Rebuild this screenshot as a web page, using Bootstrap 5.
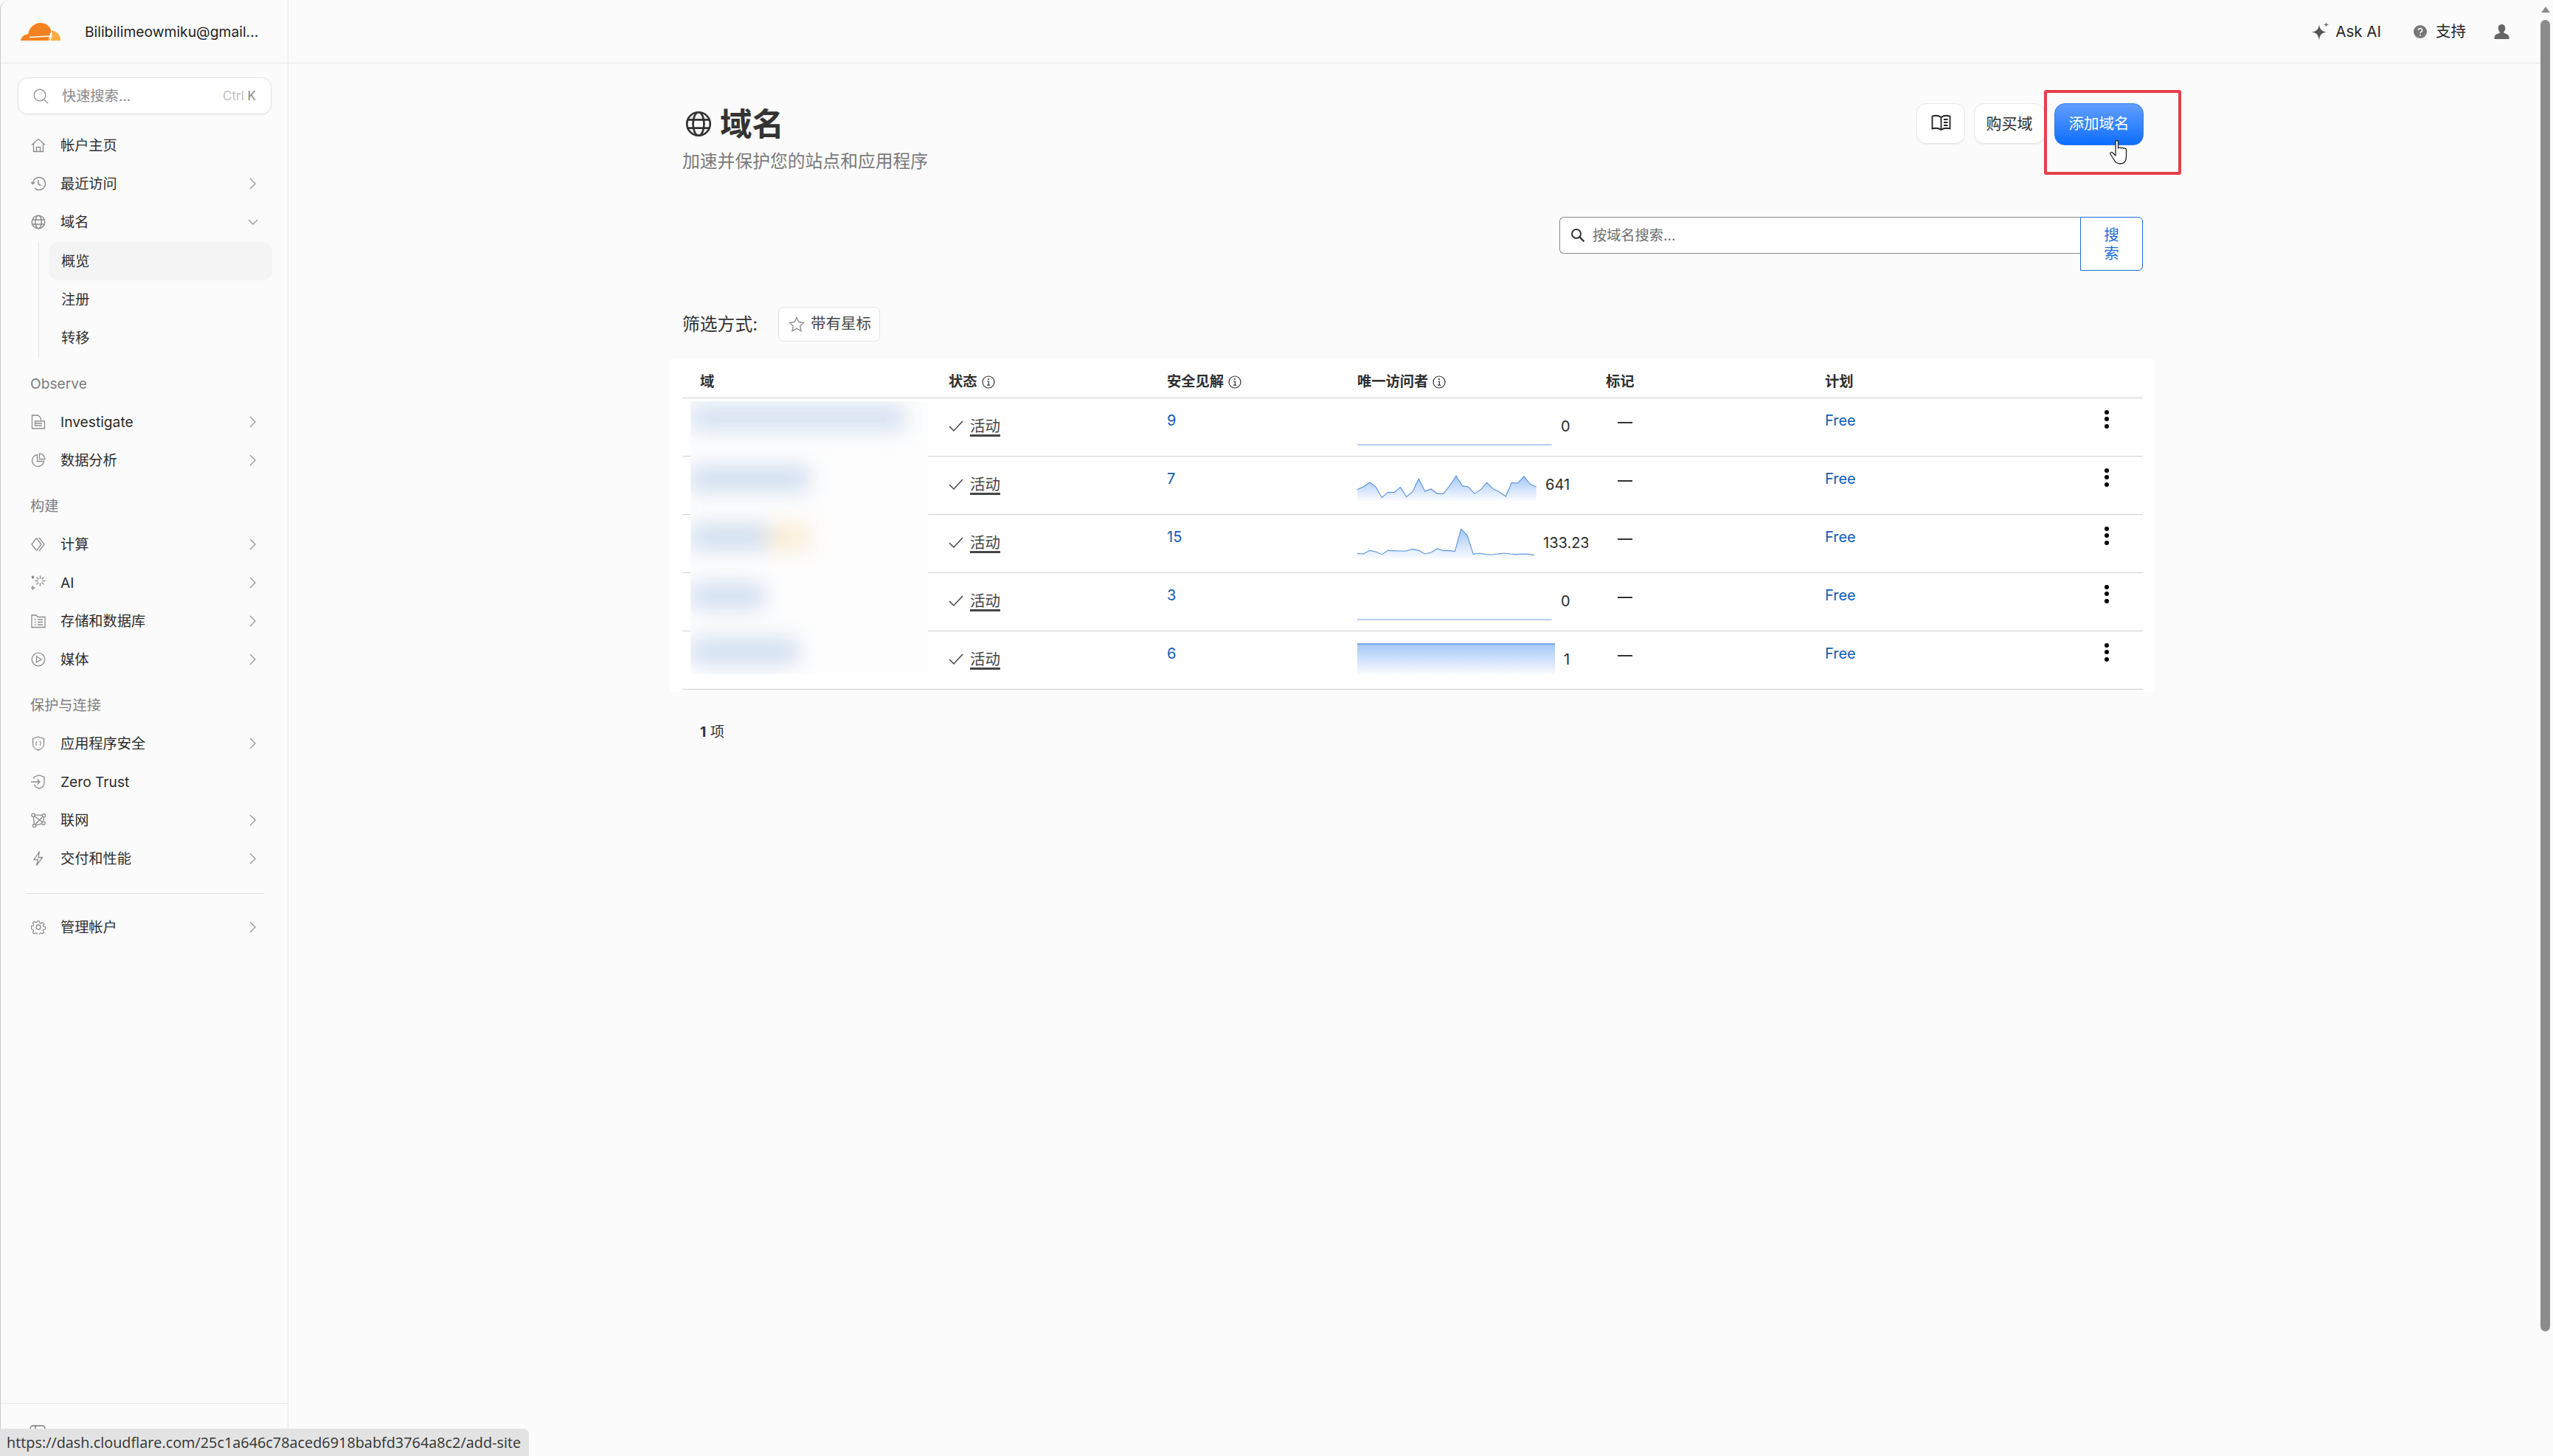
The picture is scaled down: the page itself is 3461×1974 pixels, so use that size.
<!DOCTYPE html>
<html lang="zh-CN">
<head>
<meta charset="utf-8">
<title>域名</title>
<link href="https://cdn.jsdelivr.net/npm/bootstrap@5.3.0/dist/css/bootstrap.min.css" rel="stylesheet">
<style>
html,body{height:100%;overflow:hidden}
body{background:#fbfbfb;color:#313131;font-family:Inter,"Noto Sans CJK SC",sans-serif;font-size:19.2px;line-height:24px}
.shell{height:1974px;border-left:1.5px solid #c9c9c9;border-top-left-radius:14px;overflow:hidden}
.side{width:390px;flex:0 0 390px;border-right:1px solid #e6e6e6;height:100%}
.side-top{height:86px;border-bottom:1px solid #e5e5e5;padding-left:27px;gap:33px}
.side-top span{font-size:19.3px;color:#1f1f1f}
.side-search{margin:19px 22px 16px 23px;height:50px;background:#fff;border:1.5px solid #e2e2e2;border-radius:13px;box-shadow:0 1px 2px rgba(0,0,0,.05);padding:0 20px 0 20px;color:#8a8a8a;gap:18px}
.side-search .hint{margin-left:auto;font-size:17px;color:#c0c0c0}
.side-search .hint b{font-weight:400;color:#8a8a8a}
.nav-line{height:52.2px;padding:0 42px 0 41px;gap:20px;color:#2c2c2c;text-decoration:none}
.nav-line>svg:first-child{width:20px;height:20px;flex:none;color:#8c8c8c}
.nav-line .chev{margin-left:auto;width:11px;height:18px;color:#999}
.nav-line .chev-d{margin-left:auto;margin-right:-3px;width:16px;height:11px;color:#999}
.sub-list{margin-left:51px;border-left:1px solid #e2e2e2;padding-left:13px;margin-right:21px}
.sub-line{height:52.2px;padding-left:17px;border-radius:13px}
.sub-line.on{background:#f4f4f4}
.nav-head{height:52px;padding-left:40px;color:#7d7d7d;font-size:19.2px;margin-top:9.5px}
.nav-rule{border-top:1px solid #e2e2e2;margin:20px 33px 19px 34px}
.side-foot{margin-top:auto;height:72px;border-top:1px solid #e5e5e5;padding:26px 0 0 39px}
.top-bar{height:86px;border-bottom:1px solid #e5e5e5;padding-right:42px;color:#262626;font-size:20.5px}
.top-bar .gap-a{margin-right:44px}
.top-bar .gap-b{margin-right:38px}
.top-bar .gap-i{margin-right:12px}
.page{padding:53px 5px 0 0}
.page-in{width:1980px;margin:0 auto}
.head-title{font-size:43.5px;line-height:58px;font-weight:700;color:#333;gap:11px;margin:0}
.head-sub{font-size:23.8px;line-height:44px;color:#7a7a7a;margin-bottom:53px}
.btn-set{margin:1px -1px 0 0;gap:12px}
.ghost-btn{height:55px;width:96px;background:#fff;border:1.5px solid #e6e6e6;border-radius:13px;font-size:21px;color:#2b2b2b;padding:0;box-shadow:0 1px 2px rgba(0,0,0,.06)}
.book-btn{width:66px}
.add-wrap{margin-left:1px}
.add-btn{height:57px;width:121px;padding:0;border:1px solid #2f7ef0;border-radius:14px;background:linear-gradient(#629eff,#0d6efd);color:#fff;font-size:20.5px}
.red-box{position:absolute;left:-14px;top:-18px;width:186px;height:115px;border:4.5px solid #e5404a;border-radius:3px;pointer-events:none}
.hand{position:absolute;left:75px;top:50px;width:27px;height:33px}
.find-input{width:706px;height:50px;background:#fff;border:1px solid #8a8a8a;border-right:0;border-radius:6px 0 0 6px;padding:0 14px;gap:10px;color:#6e6e6e}
.find-btn{width:85px;height:73px;padding:0 28px;background:#fff;color:#1c6fdc;border:1.5px solid #1c6fdc;border-radius:0 6px 6px 0;font-size:20.5px;line-height:25px}
.filter-row{margin:49px 0 24px;height:47px;gap:28px;font-size:23.8px}
.star-btn{height:47px;padding:0 11px 0 13px;background:#fff;border:1.5px solid #e4e4e4;border-radius:7px;gap:8px;font-size:20.5px;color:#444}
.tbl-wrap{position:relative;width:2013px;margin-left:-17px;padding:0 16px 3px 17px;background:#fff}
.tbl{table-layout:fixed;width:1980px;margin:0;--bs-table-bg:transparent;--bs-table-border-color:#d0d0d0}
.tbl th{height:52px;padding:0 0 10px;vertical-align:bottom;font-weight:700;color:#2f2f2f;font-size:19.3px;border-bottom-width:1.5px}
.tbl td{height:79px;padding:18px 0 0;vertical-align:top;border-bottom-width:1.5px;color:#2a2a2a;font-size:20px}
.tbl th:first-child{padding-left:24px}
.tbl .st{padding-top:26.5px}
.tbl .vis{padding:0}
.tbl .dash{padding-top:22px}
.tbl .kb{padding:16px 46px 0 0}
.c1{width:361px}.c2{width:296px}.c3{width:258px}.c4{width:337px}.c5{width:297px}.c6{width:300px}
.tip-i{width:18px;height:18px;margin-left:6px;vertical-align:-3px}
.state{gap:9px;color:#454545;font-size:20.5px}
.state u{text-decoration-thickness:2.5px;text-underline-offset:4px}
.lnk{color:#0f5cb5;text-decoration:none}
.spark-box{width:313px;overflow:hidden;height:78px;gap:12px;white-space:nowrap}
.spark-box svg{flex:none;height:78px}
.spark-box span{margin-top:-2px}
.em-dash{display:block;width:20px;height:2.5px;margin-left:16px;margin-top:10px;background:#333}
.dots{gap:3.5px;width:6px}
.dots i{display:block;width:6px;height:6px;border-radius:50%;background:#000}
.count{padding:42px 0 0 24px;color:#333;font-size:19.2px}
.blur-over{position:absolute;left:28px;top:57px;width:322px;height:370px;overflow:hidden;background:#fdfdfd}
.smear{height:34px;margin-left:0;background:#cfddef;filter:blur(14px)}
.sm1{width:290px;margin-top:5px;background:#d3e0f0}.sm2{width:160px;margin-top:49px}.sm3{width:105px;margin-top:45px;box-shadow:55px 0 0 #f9ecd2}.sm4{width:100px;margin-top:46px}.sm5{width:145px;margin-top:41px}
.bar-col{width:17px;flex:0 0 17px;padding-top:9px}
.bar-up{width:0;height:0;border-left:6px solid transparent;border-right:6px solid transparent;border-bottom:8px solid #8a8a8a;margin:0 0 0 1px}
.bar-thumb{width:13px;height:1778px;margin-top:10px;background:#8b8b8b;border-radius:7px}
.link-tip{position:fixed;left:0;bottom:0;height:37px;width:717px;background:#e3e3e3;border-top-right-radius:7px;padding-left:9px;font-family:"Open Sans",sans-serif;font-size:19.85px;line-height:37px;color:#333;white-space:nowrap}
</style>
</head>
<body>
<svg width="0" height="0" class="position-absolute">
<defs>
<linearGradient id="sg" x1="0" y1="0" x2="0" y2="1"><stop offset="0" stop-color="#a4c6f8"/><stop offset="1" stop-color="#a4c6f8" stop-opacity=".05"/></linearGradient>
<symbol id="ch" viewBox="0 0 11 18"><path d="M2 2l7 7-7 7" fill="none" stroke="currentColor" stroke-width="1.4"/></symbol>
<symbol id="glb" viewBox="0 0 24 24"><g fill="none" stroke="currentColor" stroke-width="1.8"><circle cx="12" cy="12" r="10.5"/><ellipse cx="12" cy="12" rx="5" ry="10.5"/><path d="M2.3 8.3h19.4M2.3 15.7h19.4"/></g></symbol>
<symbol id="inf" viewBox="0 0 18 18"><circle cx="9" cy="9" r="8" fill="none" stroke="#333" stroke-width="1.2"/><path d="M7.3 8h2v5M7 13.2h4.2" fill="none" stroke="#333" stroke-width="1.2"/><circle cx="9" cy="5" r="1.1" fill="#333"/></symbol>
<symbol id="tk" viewBox="0 0 20 16"><path d="M1 8l6 6L19 1" fill="none" stroke="#444" stroke-width="1.5"/></symbol>
</defs>
</svg>
<div class="shell d-flex">
  <aside class="side d-flex flex-column">
    <div class="side-top d-flex align-items-center">
      <svg width="54" height="24" viewBox="0 0 54 24"><path fill="#f58220" d="M0 24C1 19 5 15.6 10 15.6 11.500 6 19 0 27 0c7 0 12 4 14.500 10.500L37 24z"/><path fill="#fbad41" d="M41.500 10.500C48.500 10.500 54 16 54 24H36l5-5c2-2 2-5 .5-8.500z"/><path d="M12 19.500l27-1.500M40 24l2-7" stroke="#fff" stroke-width="1.300" fill="none"/></svg>
      <span>Bilibilimeowmiku@gmail...</span>
    </div>
    <div class="side-search d-flex align-items-center">
      <svg width="21" height="21" viewBox="0 0 21 21" class="flex-none"><circle cx="9" cy="9" r="7.800" fill="none" stroke="#999" stroke-width="1.500"/><path d="M14.500 14.500l5.500 5.500" stroke="#999" stroke-width="1.500"/></svg>
      <span>快速搜索...</span>
      <span class="hint">Ctrl <b>K</b></span>
    </div>
    <a class="nav-line d-flex align-items-center"><svg viewBox="0 0 20 20" fill="none" stroke="currentColor" stroke-width="1.300"><path d="M1 9.500L10 1.500l9 8M3.500 8v10.500h13V8M7.500 18.500v-6h5v6"/></svg>帐户主页</a>
    <a class="nav-line d-flex align-items-center"><svg viewBox="0 0 20 20" fill="none" stroke="currentColor" stroke-width="1.500"><path d="M2.500 10a8.500 8.500 0 1 1 2.500 6M10 5v5.500l3.500 2M0 8l2.500 2.500L5 8"/></svg>最近访问<svg class="chev"><use href="#ch"/></svg></a>
    <a class="nav-line d-flex align-items-center"><svg viewBox="0 0 24 24"><use href="#glb"/></svg>域名<svg class="chev-d" viewBox="0 0 16 11"><path d="M2 2l6 6 6-6" fill="none" stroke="currentColor" stroke-width="1.400"/></svg></a>
    <div class="sub-list">
      <div class="sub-line on d-flex align-items-center">概览</div>
      <div class="sub-line d-flex align-items-center">注册</div>
      <div class="sub-line d-flex align-items-center">转移</div>
    </div>
    <div class="nav-head d-flex align-items-center">Observe</div>
    <a class="nav-line d-flex align-items-center"><svg viewBox="0 0 20 20" fill="none" stroke="currentColor" stroke-width="1.300"><path d="M1.500 19V1h8l4 4v3M1.500 19h17V9h-13v5M5 12h10M5 15h10"/></svg>Investigate<svg class="chev"><use href="#ch"/></svg></a>
    <a class="nav-line d-flex align-items-center"><svg viewBox="0 0 20 20" fill="none" stroke="currentColor" stroke-width="1.300"><path d="M8.500 2.500a8 8 0 1 0 9 9h-9zM11.500 1a8 8 0 0 1 7.500 7.500h-7.500z"/></svg>数据分析<svg class="chev"><use href="#ch"/></svg></a>
    <div class="nav-head d-flex align-items-center">构建</div>
    <a class="nav-line d-flex align-items-center"><svg viewBox="0 0 20 20" fill="none" stroke="currentColor" stroke-width="1.300"><path d="M7 2L1 10l6 8M11 1l7 9-7 9M7.500 1.500L14 10l-6.500 8.500"/></svg>计算<svg class="chev"><use href="#ch"/></svg></a>
    <a class="nav-line d-flex align-items-center"><svg viewBox="0 0 20 20" fill="none" stroke="currentColor" stroke-width="1.400" stroke-linecap="round"><path d="M12.500 1v3M12.500 11v3M6 7.500h3M16 7.500h3M8 3l2 2M15 10l2 2M17 3l-2 2M10 10l-2 2M2.500 14.500v5M0 17h5"/><circle cx="2.500" cy="2.500" r="1.200" fill="currentColor"/></svg>AI<svg class="chev"><use href="#ch"/></svg></a>
    <a class="nav-line d-flex align-items-center"><svg viewBox="0 0 20 20" fill="none" stroke="currentColor" stroke-width="1.300"><path d="M1 18.500V2h6l2 2.500h10v14zM5 8h1.500M9 8h7M5 11.500h1.500M9 11.500h7M5 15h1.500M9 15h7"/></svg>存储和数据库<svg class="chev"><use href="#ch"/></svg></a>
    <a class="nav-line d-flex align-items-center"><svg viewBox="0 0 20 20" fill="none" stroke="currentColor" stroke-width="1.300"><circle cx="10" cy="10" r="8.800"/><path d="M7.500 6l6.500 4-6.500 4z"/></svg>媒体<svg class="chev"><use href="#ch"/></svg></a>
    <div class="nav-head d-flex align-items-center">保护与连接</div>
    <a class="nav-line d-flex align-items-center"><svg viewBox="0 0 20 20" fill="none" stroke="currentColor" stroke-width="1.300"><path d="M10 1l7.500 2.500V11c0 4-3.500 7-7.500 8-4-1-7.500-4-7.500-8V3.500zM8 7c-1.500 1.500-1.500 4 0 5.500M12 7c1.500 1.500 1.500 4 0 5.500"/></svg>应用程序安全<svg class="chev"><use href="#ch"/></svg></a>
    <a class="nav-line d-flex align-items-center"><svg viewBox="0 0 20 20" fill="none" stroke="currentColor" stroke-width="1.300"><path d="M4 6V3.500L11 1l7 2.500V11c0 4-3 7-7 8-3-.8-5.500-2.800-6.500-5.500M0 10h12M8.500 6.500L12 10l-3.500 3.500"/></svg>Zero Trust</a>
    <a class="nav-line d-flex align-items-center"><svg viewBox="0 0 20 20" fill="none" stroke="currentColor" stroke-width="1.300"><circle cx="3" cy="3" r="2.200"/><circle cx="17.500" cy="3.500" r="2.200"/><circle cx="4.500" cy="17.500" r="2.200"/><circle cx="17" cy="14" r="2.200"/><path d="M5.200 3.200h10M3.300 5.200l1 10M6.500 16.800l8.500-2.200M17.400 5.700L17 11.800M4.600 4.600l10.800 8M15.800 5.200L5.800 15.800"/></svg>联网<svg class="chev"><use href="#ch"/></svg></a>
    <a class="nav-line d-flex align-items-center"><svg viewBox="0 0 20 20" fill="none" stroke="currentColor" stroke-width="1.300"><path d="M11.500 .5L4 11.500h5.500l-2 8 8-11h-5.500z"/></svg>交付和性能<svg class="chev"><use href="#ch"/></svg></a>
    <div class="nav-rule"></div>
    <a class="nav-line d-flex align-items-center"><svg viewBox="0 0 20 20" fill="none" stroke="currentColor" stroke-width="1.300"><circle cx="10" cy="10" r="3"/><path d="M8.400 1h3.200l.5 2.700 1.900.8 2.300-1.600 2.300 2.300-1.600 2.300.8 1.900 2.700.5v3.200l-2.700.5-.8 1.900 1.600 2.300-2.300 2.300-2.300-1.600-1.900.8-.5 2.700H8.400l-.5-2.700-1.900-.8-2.300 1.600-2.300-2.300 1.600-2.300-.8-1.900-2.700-.5V8.400l2.700-.5.8-1.900-1.600-2.300 2.300-2.300 2.300 1.600 1.900-.8z" transform="translate(1 1) scale(.9)"/></svg>管理帐户<svg class="chev"><use href="#ch"/></svg></a>
    <div class="side-foot"><svg width="22" height="22" viewBox="0 0 22 22" fill="none" stroke="#777" stroke-width="1.500"><rect x="1" y="1" width="20" height="20" rx="4"/><path d="M8 1v20"/></svg></div>
  </aside>

  <main class="flex-grow-1 min-w-0">
    <header class="top-bar d-flex align-items-center justify-content-end">
      <svg width="24" height="26" viewBox="0 0 24 26" class="me-2"><path fill="#555" d="M10 3.500c1 6.500 3.500 9 10 10-6.500 1-9 3.500-10 11-1-7.500-3.500-10-10-11 6.500-1 9-3.500 10-10z"/><path fill="#777" d="M19.500 0c.4 2.200 1.200 3.100 3.500 3.500-2.300.4-3.100 1.300-3.500 3.500-.4-2.200-1.200-3.100-3.500-3.500 2.300-.4 3.100-1.300 3.500-3.500z"/></svg>
      <span class="gap-a">Ask AI</span>
      <svg width="18" height="18" viewBox="0 0 18 18" class="gap-i"><circle cx="9" cy="9" r="9" fill="#777"/><path d="M6.500 7a2.500 2.500 0 1 1 3.500 2.300c-.8.400-1 .8-1 1.700" fill="none" stroke="#fff" stroke-width="1.500"/><circle cx="9" cy="13.700" r="1" fill="#fff"/></svg>
      <span class="gap-b">支持</span>
      <svg width="21" height="20" viewBox="0 0 21 20"><path fill="#666" d="M10.500 0c3 0 4.800 2.300 4.800 5.200 0 2-.8 3.800-2 5v1.500c3 1 6 2 7.200 5V20H.500v-3.300c1.200-3 4.200-4 7.200-5v-1.500c-1.200-1.200-2-3-2-5C5.700 2.300 7.500 0 10.500 0z"/></svg>
    </header>
    <div class="page">
      <div class="page-in">
        <div class="d-flex justify-content-between align-items-start">
          <div>
            <h1 class="head-title d-flex align-items-center"><svg width="36" height="36" class="ms-1"><use href="#glb"/></svg>域名</h1>
            <p class="head-sub">加速并保护您的站点和应用程序</p>
          </div>
          <div class="btn-set d-flex align-items-start">
            <button class="btn ghost-btn book-btn d-flex align-items-center justify-content-center" type="button"><svg width="27" height="25" viewBox="0 0 27 25" fill="none" stroke="#222" stroke-width="1.800"><path d="M13.500 4C10 1.500 5 1.500 1.500 2.500v17c3.500-1 8.500-1 12 1.500 3.500-2.500 8.500-2.500 12-1.500v-17C22 1.500 17 1.500 13.500 4zM13.500 4v17M17 7h5.500M17 11h5.500M17 15h5.500"/></svg></button>
            <button class="btn ghost-btn" type="button">购买域</button>
            <div class="add-wrap position-relative">
              <button class="btn add-btn d-block" type="button">添加域名</button>
              <div class="red-box"></div>
              <svg class="hand" viewBox="0 0 27 33"><path fill="#fff" stroke="#222" stroke-width="1.300" stroke-linejoin="round" d="M8 2c0-2 3.500-2 3.500 0v9c.500-1.500 3.500-1.500 4 0 .500-1 3.300-1 3.700.5 .800-.8 3.300-.5 3.300 1.500v9c0 5-2 10-8 10-5 0-7-2-9-6L1 19c-1-2 1.500-3.500 3-2l4 4z"/></svg>
            </div>
          </div>
        </div>
        <div class="d-flex justify-content-end align-items-start">
          <div class="find-input d-flex align-items-center"><svg width="20" height="20" viewBox="0 0 20 20"><circle cx="8" cy="8" r="6" fill="none" stroke="#333" stroke-width="2"/><path d="M12.500 12.500l6 6" stroke="#333" stroke-width="2.400"/></svg><span>按域名搜索...</span></div>
          <button class="btn find-btn" type="button">搜索</button>
        </div>
        <div class="filter-row d-flex align-items-center">
          <span>筛选方式:</span>
          <button class="btn star-btn d-flex align-items-center" type="button"><svg width="22" height="21" viewBox="0 0 22 21"><path d="M11 1.500l2.900 6 6.600.9-4.800 4.600 1.200 6.600-5.900-3.200-5.900 3.200L6.300 13 1.500 8.400l6.600-.9z" fill="none" stroke="#8f8f8f" stroke-width="1.400"/></svg>带有星标</button>
        </div>
        <div class="tbl-wrap">
          <table class="table tbl">
            <colgroup><col class="c1"><col class="c2"><col class="c3"><col class="c4"><col class="c5"><col class="c6"><col></colgroup>
            <thead><tr><th>域</th><th>状态<svg class="tip-i"><use href="#inf"/></svg></th><th>安全见解<svg class="tip-i"><use href="#inf"/></svg></th><th>唯一访问者<svg class="tip-i"><use href="#inf"/></svg></th><th>标记</th><th>计划</th><th></th></tr></thead>
            <tbody>
              <tr><td></td><td class="st"><div class="state d-flex align-items-center"><svg width="20" height="16"><use href="#tk"/></svg><u>活动</u></div></td><td><a class="lnk">9</a></td>
                <td class="vis"><div class="spark-box d-flex align-items-center"><svg width="264" viewBox="180 178 792 234"><path d="M180 367H971" stroke="#6b9fe4" stroke-width="3.500" fill="none"/></svg><span>0</span></div></td>
                <td class="dash"><i class="em-dash"></i></td><td><a class="lnk">Free</a></td><td class="kb"><div class="dots d-flex flex-column ms-auto"><i></i><i></i><i></i></div></td></tr>
              <tr><td></td><td class="st"><div class="state d-flex align-items-center"><svg width="20" height="16"><use href="#tk"/></svg><u>活动</u></div></td><td><a class="lnk">7</a></td>
                <td class="vis"><div class="spark-box d-flex align-items-center"><svg width="243" viewBox="180 415 729 234"><path fill="url(#sg)" d="M180 549L205 538 230 520 255 538 280 582 305 560 330 561 355 540 380 579 405 558 430 505 455 556 480 547 505 566 530 566 555 535 582 493 607 534 632 538 657 566 682 549 707 521 732 546 757 558 784 577 808 521 833 523 858 496 883 527 908 538V596H180Z"/><path fill="none" stroke="#5b95e2" stroke-width="3.500" d="M180 549L205 538 230 520 255 538 280 582 305 560 330 561 355 540 380 579 405 558 430 505 455 556 480 547 505 566 530 566 555 535 582 493 607 534 632 538 657 566 682 549 707 521 732 546 757 558 784 577 808 521 833 523 858 496 883 527 908 538"/></svg><span>641</span></div></td>
                <td class="dash"><i class="em-dash"></i></td><td><a class="lnk">Free</a></td><td class="kb"><div class="dots d-flex flex-column ms-auto"><i></i><i></i><i></i></div></td></tr>
              <tr><td></td><td class="st"><div class="state d-flex align-items-center"><svg width="20" height="16"><use href="#tk"/></svg><u>活动</u></div></td><td><a class="lnk">15</a></td>
                <td class="vis"><div class="spark-box d-flex align-items-center"><svg width="240" viewBox="180 652 720 234"><path fill="url(#sg)" d="M180 809L205 811 230 797 255 802 280 813 305 797 330 798 355 799 380 799 405 791 430 797 455 811 480 805 505 790 530 798 555 797 577 801 602 710 627 735 652 812 677 808 702 813 727 814 752 811 777 808 802 811 827 813 852 811 877 812 899 816V830H180Z"/><path fill="none" stroke="#5b95e2" stroke-width="3.500" d="M180 809L205 811 230 797 255 802 280 813 305 797 330 798 355 799 380 799 405 791 430 797 455 811 480 805 505 790 530 798 555 797 577 801 602 710 627 735 652 812 677 808 702 813 727 814 752 811 777 808 802 811 827 813 852 811 877 812 899 816"/></svg><span>133.23</span></div></td>
                <td class="dash"><i class="em-dash"></i></td><td><a class="lnk">Free</a></td><td class="kb"><div class="dots d-flex flex-column ms-auto"><i></i><i></i><i></i></div></td></tr>
              <tr><td></td><td class="st"><div class="state d-flex align-items-center"><svg width="20" height="16"><use href="#tk"/></svg><u>活动</u></div></td><td><a class="lnk">3</a></td>
                <td class="vis"><div class="spark-box d-flex align-items-center"><svg width="264" viewBox="180 889 792 234"><path d="M180 1078H971" stroke="#6b9fe4" stroke-width="3.500" fill="none"/></svg><span>0</span></div></td>
                <td class="dash"><i class="em-dash"></i></td><td><a class="lnk">Free</a></td><td class="kb"><div class="dots d-flex flex-column ms-auto"><i></i><i></i><i></i></div></td></tr>
              <tr><td></td><td class="st"><div class="state d-flex align-items-center"><svg width="20" height="16"><use href="#tk"/></svg><u>活动</u></div></td><td><a class="lnk">6</a></td>
                <td class="vis"><div class="spark-box d-flex align-items-center"><svg width="268" viewBox="180 1126 804 234"><path fill="url(#sg)" d="M180 1177H984V1302H180Z"/><path fill="none" stroke="#5b95e2" stroke-width="4" d="M180 1177H984"/></svg><span>1</span></div></td>
                <td class="dash"><i class="em-dash"></i></td><td><a class="lnk">Free</a></td><td class="kb"><div class="dots d-flex flex-column ms-auto"><i></i><i></i><i></i></div></td></tr>
            </tbody>
          </table>
          <div class="blur-over">
            <div class="smear sm1"></div><div class="smear sm2"></div><div class="smear sm3"></div><div class="smear sm4"></div><div class="smear sm5"></div>
          </div>
        </div>
        <div class="count"><b>1</b> 项</div>
      </div>
    </div>
  </main>
  <div class="bar-col"><div class="bar-up"></div><div class="bar-thumb"></div></div>
</div>
<div class="link-tip">https://dash.cloudflare.com/25c1a646c78aced6918babfd3764a8c2/add-site</div>
</body>
</html>
